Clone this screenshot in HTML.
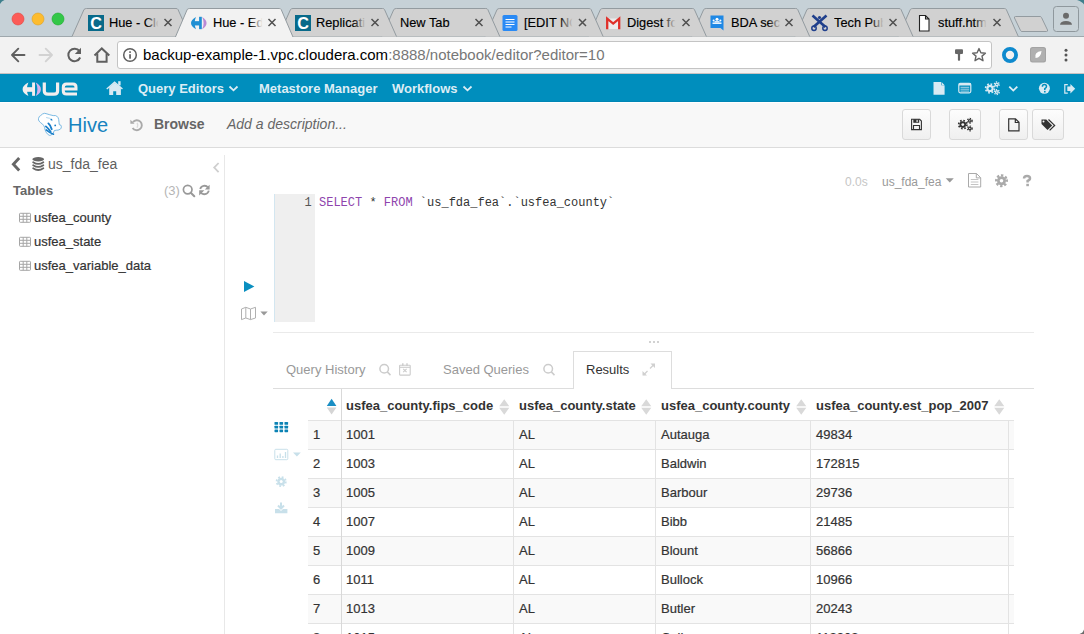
<!DOCTYPE html>
<html><head><meta charset="utf-8">
<style>
*{box-sizing:border-box;margin:0;padding:0}
html,body{width:1084px;height:634px;overflow:hidden;background:#fff;font-family:"Liberation Sans",sans-serif;position:relative}
.a{position:absolute}
svg.a{overflow:visible}
#frame{left:0;top:0;width:1084px;height:37px;background:#c6d1d7}
#toolbar{left:0;top:37px;width:1084px;height:37px;background:#f2f2f2;border-bottom:1px solid #c8c2c2}
#url{left:117px;top:41px;width:875px;height:28px;background:#fff;border:1px solid #c4c4c4;border-radius:3px}
#urltext{left:143px;top:45px;font-size:15px;color:#000;white-space:pre;line-height:20px}
#urltext span{color:#777}
#nav{left:0;top:74px;width:1084px;height:28px;background:#008ebd;border-bottom:1px solid #0086b5}
.nt{top:80.6px;font-size:13px;font-weight:bold;color:#dcedf5;line-height:16px;white-space:pre}
#hdr{left:0;top:102px;width:1084px;height:46px;background:#f8f8f8;border-top:1px solid #fff;border-bottom:1px solid #dcdcdc}
.btn{top:109px;height:31px;border:1px solid #d9d9d9;border-radius:3px;background:linear-gradient(#fdfdfd,#efefef)}
.tabt{font-size:12.8px;color:#000;-webkit-text-stroke:0.15px #000;white-space:pre;top:15px;line-height:15px;overflow:hidden;width:50px}
.fade{top:12px;width:14px;height:20px;background:linear-gradient(90deg,rgba(209,209,209,0),#d1d1d1 90%)}
.fadea{top:12px;width:14px;height:20px;background:linear-gradient(90deg,rgba(242,242,242,0),#f2f2f2 90%)}
.tx{font-size:13px;color:#333;-webkit-text-stroke:0.2px #333;white-space:pre;line-height:16px}
.th{top:398px;font-size:13px;font-weight:bold;color:#333;white-space:pre;line-height:16px}
.td{font-size:13px;color:#333;-webkit-text-stroke:0.2px #333;white-space:pre;line-height:16px}
</style></head><body>

<!-- ============ Chrome frame ============ -->
<div id="frame" class="a"></div>
<svg class="a" style="left:0;top:0" width="1084" height="37">
  <circle cx="18" cy="19" r="6" fill="#fc5b57" stroke="#e0443e" stroke-width="0.6"/>
  <circle cx="38" cy="19" r="6" fill="#fdbc2e" stroke="#dea123" stroke-width="0.6"/>
  <circle cx="58" cy="19" r="6" fill="#33c748" stroke="#1aab29" stroke-width="0.6"/>
  <line x1="0" y1="36.5" x2="1084" y2="36.5" stroke="#9fa8ad" stroke-width="1"/>
  <g stroke="#939ba0" stroke-width="1" fill="#d1d1d1">
    <path d="M72,36.5 L84,9.5 Q85,8.5 86.5,8.5 L176,8.5 Q177.5,8.5 178,9.5 L190,36.5"/>
    <path d="M898.3,36.5 L910.3,9.5 Q911.3,8.5 912.8,8.5 L1004.3,8.5 Q1005.8,8.5 1006.3,9.5 L1018.3,36.5"/>
    <path d="M795,36.5 L807,9.5 Q808,8.5 809.5,8.5 L899,8.5 Q900.5,8.5 901,9.5 L913,36.5"/>
    <path d="M691.7,36.5 L703.7,9.5 Q704.7,8.5 706.2,8.5 L795.7,8.5 Q797.2,8.5 797.7,9.5 L809.7,36.5"/>
    <path d="M588.4,36.5 L600.4,9.5 Q601.4,8.5 602.9,8.5 L692.4,8.5 Q693.9,8.5 694.4,9.5 L706.4,36.5"/>
    <path d="M485.1,36.5 L497.1,9.5 Q498.1,8.5 499.6,8.5 L589.1,8.5 Q590.6,8.5 591.1,9.5 L603.1,36.5"/>
    <path d="M381.8,36.5 L393.8,9.5 Q394.8,8.5 396.3,8.5 L485.8,8.5 Q487.3,8.5 487.8,9.5 L499.8,36.5"/>
    <path d="M278.5,36.5 L290.5,9.5 Q291.5,8.5 293,8.5 L382.5,8.5 Q384,8.5 384.5,9.5 L396.5,36.5"/>
    <path d="M175.2,37.5 L187.2,9.5 Q188.2,8.5 189.7,8.5 L279.2,8.5 Q280.7,8.5 281.2,9.5 L293.2,37.5" fill="#f2f2f2"/>
    <path d="M1015.5,16.5 L1040,16.5 Q1041,16.5 1041.5,17.5 L1047.5,30 Q1048,31.5 1046.5,31.5 L1022,31.5 Q1021,31.5 1020.5,30.5 L1014.5,18 Q1014,16.5 1015.5,16.5Z"/>
  </g>
  <rect x="1053.5" y="6.5" width="25" height="25" rx="3" fill="#c9d3d8" stroke="#8f989d"/>
  <circle cx="1066" cy="15.8" r="3" fill="#6a6a6a"/>
  <path d="M1060,24.7 Q1060.5,21 1066,21 Q1071.5,21 1072,24.7Z" fill="#6a6a6a"/>
  <path d="M0,0 H4.5 Q1.5,1 0,4Z" fill="#3e7f8c"/>
  <path d="M1084,0 H1077 Q1082,1.5 1084,4.5Z" fill="#3e7f8c"/>
</svg>
<div class="a tabt" style="left:109px">Hue - Cloudera</div><div class="a fade" style="left:146px"></div>
<div class="a tabt" style="left:213px">Hue - Editor</div><div class="a fadea" style="left:250px"></div>
<div class="a tabt" style="left:316px">Replication</div><div class="a fade" style="left:353px"></div>
<div class="a tabt" style="left:400px;width:60px">New Tab</div>
<div class="a tabt" style="left:524px">[EDIT NOTES</div><div class="a fade" style="left:560px"></div>
<div class="a tabt" style="left:627px">Digest for</div><div class="a fade" style="left:663px"></div>
<div class="a tabt" style="left:731px">BDA secret</div><div class="a fade" style="left:768px"></div>
<div class="a tabt" style="left:834px">Tech Pubs</div><div class="a fade" style="left:871px"></div>
<div class="a tabt" style="left:938px">stuff.html</div><div class="a fade" style="left:974px"></div>
<svg class="a" style="left:0;top:0" width="1084" height="37">
  <!-- favicons -->
  <rect x="88" y="15" width="16" height="16" fill="#086a8a"/>
  <text x="96.2" y="29" font-family="Liberation Sans" font-weight="bold" font-size="16.2" fill="#fff" text-anchor="middle">C</text>
  <rect x="295" y="15" width="16" height="16" fill="#086a8a"/>
  <text x="303.2" y="29" font-family="Liberation Sans" font-weight="bold" font-size="16.2" fill="#fff" text-anchor="middle">C</text>
  <!-- hue favicon -->
  <g transform="translate(171.8,7.96) scale(0.85,0.93)">
  <g fill="#1f8fd3">
    <path d="M28.4,9.6 Q22.6,12.5 22.6,16.3 Q22.6,20.2 28.4,23 Q26.9,19.8 26.9,16.3 Q26.9,12.8 28.4,9.6Z"/>
    <rect x="26" y="14.2" width="7" height="4.6"/>
    <rect x="32.1" y="9.5" width="3.2" height="13.3"/>
  </g>
  <path d="M35.8,9.6 Q40.9,12.5 40.9,16.3 Q40.9,20.2 35.8,23 Q37.4,19.8 37.4,16.3 Q37.4,12.8 35.8,9.6Z" fill="#b98ad6"/>
  </g>
  <!-- docs -->
  <rect x="502.5" y="15" width="15" height="16" rx="1.5" fill="#2a8af5"/>
  <path d="M505.5,19.5h9M505.5,22h9M505.5,24.5h9M505.5,27h6" stroke="#fff" stroke-width="1"/>
  <!-- gmail -->
  <path d="M607,18.5 h12.5 v10.5 h-12.5z" fill="#ececec"/>
  <path d="M607.2,29.2 V18.6 L613.2,23.6 L619.2,18.6 V29.2" fill="none" stroke="#e0302a" stroke-width="2.3" stroke-linejoin="miter"/>
  <!-- classroom-ish -->
  <path d="M710.5,15.5 H723.5 V30.5 L720.5,28 H710.5Z" fill="#1e88e5"/>
  <path d="M712.5,23.2 h9" stroke="#fff" stroke-width="1.4"/><circle cx="717" cy="19.3" r="1.5" fill="#fff"/>
  <circle cx="713.6" cy="20.6" r="1" fill="#fff"/><circle cx="720.4" cy="20.6" r="1" fill="#fff"/>
  <path d="M714.5,21.8 h5" stroke="#fff" stroke-width="1.2"/>
  <!-- scissors -->
  <path d="M812.5,15.5 L825.5,27 M826.5,15.5 L813.5,27" stroke="#1f3f8c" stroke-width="2.6"/><circle cx="819.5" cy="17.5" r="1.6" fill="#1f3f8c"/>
  <circle cx="814" cy="28.3" r="2.2" fill="none" stroke="#1f3f8c" stroke-width="1.5"/>
  <circle cx="825" cy="28.3" r="2.2" fill="none" stroke="#1f3f8c" stroke-width="1.5"/>
  <!-- file -->
  <path d="M919.5,15.5 h6 l3.5,3.5 v12 h-9.5z M925.5,15.5 v3.5 h3.5" fill="#fff" stroke="#222" stroke-width="1.1"/>
  <!-- close x's -->
  <g stroke="#505050" stroke-width="1.5">
    <path d="M164.5,19 l7,7 M171.5,19 l-7,7"/>
    <path d="M268.5,19 l7,7 M275.5,19 l-7,7"/>
    <path d="M371.5,19 l7,7 M378.5,19 l-7,7"/>
    <path d="M475.5,19 l7,7 M482.5,19 l-7,7"/>
    <path d="M579,19 l7,7 M586,19 l-7,7"/>
    <path d="M682.5,19 l7,7 M689.5,19 l-7,7"/>
    <path d="M785.5,19 l7,7 M792.5,19 l-7,7"/>
    <path d="M889.5,19 l7,7 M896.5,19 l-7,7"/>
    <path d="M993.5,19 l7,7 M1000.5,19 l-7,7"/>
  </g>
</svg>

<!-- ============ Toolbar ============ -->
<div id="toolbar" class="a"></div>
<div id="url" class="a"></div>
<div id="urltext" class="a">backup-example-1.vpc.cloudera.com<span>:8888/notebook/editor?editor=10</span></div>
<svg class="a" style="left:0;top:0" width="1084" height="73">
  <g fill="none" stroke="#5f5f5f" stroke-width="1.9" stroke-linecap="round" stroke-linejoin="round">
    <path d="M24.5,55 H12 M18.3,48.7 L12,55 L18.3,61.3"/>
  </g>
  <g fill="none" stroke="#d2d2d2" stroke-width="1.9" stroke-linecap="round" stroke-linejoin="round">
    <path d="M39.5,55 H52 M45.7,48.7 L52,55 L45.7,61.3"/>
  </g>
  <path d="M79.5,51.2 A6.2,6.2 0 1 0 80.2,57.5" fill="none" stroke="#5f5f5f" stroke-width="2"/>
  <path d="M81,47.8 V54 H74.8Z" fill="#5f5f5f"/>
  <g fill="none" stroke="#5f5f5f" stroke-width="2" stroke-linejoin="miter">
    <path d="M94.5,55.5 L101.8,48.4 L109.3,55.5"/>
    <path d="M97.3,53.5 V61.8 H106.6 V53.5"/>
  </g>
  <circle cx="130" cy="55" r="6.3" fill="none" stroke="#5f5f5f" stroke-width="1.5"/>
  <rect x="129.2" y="51.3" width="1.7" height="1.6" fill="#5f5f5f"/>
  <rect x="129.2" y="54.2" width="1.7" height="4.5" fill="#5f5f5f"/>
  <!-- key -->
  <rect x="955" y="49.2" width="8" height="4.8" rx="1" fill="#666"/>
  <rect x="957.9" y="53.5" width="2.2" height="7.2" rx="0.8" fill="#666"/>
  <!-- star -->
  <path d="M979,48.6 L980.9,52.8 L985.4,53.2 L982,56.1 L983,60.7 L979,58.3 L975,60.7 L976,56.1 L972.6,53.2 L977.1,52.8Z" fill="none" stroke="#666" stroke-width="1.4" stroke-linejoin="round"/>
  <!-- ext ring -->
  <circle cx="1010" cy="55" r="6.1" fill="none" stroke="#0e8ace" stroke-width="3.8"/>
  <!-- gray ext -->
  <rect x="1030" y="47" width="16" height="15.6" rx="2.5" fill="#a3a3a3"/>
  <rect x="1031" y="48" width="14" height="13.6" rx="2" fill="#b0b0b0"/>
  <path d="M1035.5,58 Q1034,52 1041.5,51 Q1041,57.5 1035.5,58Z" fill="#fff"/>
  <!-- menu -->
  <circle cx="1066" cy="50.2" r="1.5" fill="#555"/>
  <circle cx="1066" cy="55" r="1.5" fill="#555"/>
  <circle cx="1066" cy="59.9" r="1.5" fill="#555"/>
</svg>

<!-- ============ Hue nav ============ -->
<div id="nav" class="a"></div>
<svg class="a" style="left:0;top:73px" width="1084" height="29">
  <!-- logo -->
  <g fill="#f3eeee">
    <path d="M28.4,9.6 Q22.6,12.5 22.6,16.3 Q22.6,20.2 28.4,23 Q26.9,19.8 26.9,16.3 Q26.9,12.8 28.4,9.6Z"/>
    <rect x="26" y="14.2" width="7" height="4.6"/>
    <rect x="32.1" y="9.5" width="2.9" height="13.3"/>
  </g>
  <path d="M35.8,9.6 Q40.9,12.5 40.9,16.3 Q40.9,20.2 35.8,23 Q37.4,19.8 37.4,16.3 Q37.4,12.8 35.8,9.6Z" fill="#d6b2ee"/>
  <path d="M44.3,9.5 V18 Q44.3,21.1 48,21.1 H54 Q57.6,21.1 57.6,18 V9.5" fill="none" stroke="#f3eeee" stroke-width="3.2"/>
  <path d="M77,21.1 H66.5 Q63.3,21.1 63.3,18 V14.2 Q63.3,11.1 66.5,11.1 H73 Q76,11.1 76,14.2 V15.9 H64" fill="none" stroke="#f3eeee" stroke-width="3"/>
  <!-- home -->
  <g fill="#d8eaf3">
    <path d="M106.3,15.4 L114.6,8.3 L122.9,15.4 L122,16.4 L114.6,10.2 L107.2,16.4Z"/>
    <rect x="118.2" y="8.2" width="2.4" height="4.2"/>
    <path d="M109.2,14.2 L114.6,9.9 L120.9,14.6 V22 H116.2 V18.2 H113.2 V22 H109.2Z"/>
  </g>
  <!-- chevrons -->
  <g fill="none" stroke="#dcedf5" stroke-width="1.8">
    <path d="M229.5,13.5 L233.5,17.3 L237.5,13.5"/>
    <path d="M463.5,13.5 L467.5,17.3 L471.5,13.5"/>
    <path d="M1009.3,13.6 L1013.3,17.6 L1017.3,13.6"/>
  </g>
  <!-- right icons -->
  <path d="M933.5,9 H941 L944.6,12.6 V21.8 H933.5Z" fill="#d8eaf3"/>
  <path d="M941.3,9 V12.3 H944.6Z" fill="#008ebd"/>
  <path d="M941.8,9.3 L944.4,12 H941.8Z" fill="#d8eaf3"/>
  <rect x="958.8" y="10.3" width="12" height="9.5" rx="1.5" fill="none" stroke="#d8eaf3" stroke-width="1.2"/>
  <rect x="959" y="10.2" width="11.8" height="2.3" fill="#d8eaf3"/>
  <path d="M960.5,14.3 H969.2 M960.5,16.2 H969.2 M960.5,18.1 H969.2" stroke="#a8d2e6" stroke-width="1"/>
  <circle cx="990" cy="15.4" r="3.6" fill="#d8eaf3"/><circle cx="990" cy="15.4" r="4.40" fill="none" stroke="#d8eaf3" stroke-width="1.7" stroke-dasharray="1.728 1.728"/><circle cx="990" cy="15.4" r="1.5" fill="#008ebd"/><circle cx="996.8" cy="11.4" r="2.0" fill="#d8eaf3"/><circle cx="996.8" cy="11.4" r="2.5" fill="none" stroke="#d8eaf3" stroke-width="1.2" stroke-dasharray="1.31 1.31"/><circle cx="996.8" cy="11.4" r="0.7" fill="#008ebd"/><circle cx="996.8" cy="19.1" r="2.0" fill="#d8eaf3"/><circle cx="996.8" cy="19.1" r="2.5" fill="none" stroke="#d8eaf3" stroke-width="1.2" stroke-dasharray="1.31 1.31"/><circle cx="996.8" cy="19.1" r="0.7" fill="#008ebd"/>
  <circle cx="1044.4" cy="15.3" r="5.5" fill="#d8eaf3"/>
  <path d="M1042.4,13.7 Q1042.4,11.6 1044.4,11.6 Q1046.5,11.6 1046.5,13.4 Q1046.5,14.7 1044.8,15.6 V17" fill="none" stroke="#008ebd" stroke-width="1.5"/>
  <rect x="1044" y="17.9" width="1.6" height="1.6" fill="#008ebd"/>
  <path d="M1067.8,11.6 H1064.8 V20.2 H1067.8" fill="none" stroke="#d8eaf3" stroke-width="1.2"/>
  <path d="M1067.3,13.5 H1070.4 V11.1 L1075.2,15.8 L1070.4,20.5 V18.1 H1067.3Z" fill="#d8eaf3"/>
</svg>
<div class="a nt" style="left:138px">Query Editors</div>
<div class="a nt" style="left:259px">Metastore Manager</div>
<div class="a nt" style="left:392px">Workflows</div>

<!-- ============ Header ============ -->
<div id="hdr" class="a"></div>
<div class="a" style="left:68px;top:113px;font-size:20px;color:#1683bf;line-height:24px">Hive</div>
<div class="a" style="left:154px;top:116px;font-size:14px;font-weight:bold;color:#666;line-height:17px">Browse</div>
<div class="a" style="left:227px;top:116px;font-size:14px;font-style:italic;color:#666;line-height:17px">Add a description...</div>
<div class="a btn" style="left:902px;width:29px"></div>
<div class="a btn" style="left:949px;width:32px"></div>
<div class="a btn" style="left:999px;width:29px"></div>
<div class="a btn" style="left:1032px;width:32px"></div>
<svg class="a" style="left:0;top:102px" width="1084" height="46">
  <!-- hive logo -->
  <path d="M38.5,16.6 Q39,14 40.6,13.6 Q42.5,11.5 44.6,11.3 Q47,11.8 49.2,12.6 L53.2,13.6 Q56,13.3 56.7,14.1 Q58.5,15.5 58.7,17.6 Q59,20.5 59.3,22.7 Q61.5,23 61.3,24.2 Q61.5,26.5 60.3,27.2 Q58,28.5 56.2,28.2 L54.2,28.7 Q53.5,31.5 52.2,32.3 Q50.5,33.6 49.2,33.3 Q47,32 46.1,30.2 Q44.6,27.5 44.6,25.2 Q43.5,23 42.6,22.2 Q40,20.5 39.1,19.1 Q38.2,18 38.5,16.6Z" fill="#fff" stroke="#5aa8dc" stroke-width="0.8"/>
  <g fill="none" stroke="#1b7fc9" stroke-linecap="round">
    <path d="M48.4,21.4 Q50.8,23.5 51.7,27.2" stroke-width="1.9"/>
    <path d="M45.9,24.4 Q48.5,26.5 50.7,29.7" stroke-width="1.7"/>
    <path d="M46.2,27.9 Q49.5,30.8 53.5,32.2" stroke-width="1.5"/>
    <path d="M46.5,15.5 Q50,15.5 52.5,18.5" stroke="#9ccbea" stroke-width="0.8"/>
  </g>
  <circle cx="51.4" cy="17.6" r="0.9" fill="#1b7fc9"/>
  <circle cx="55.2" cy="23.4" r="0.9" fill="#1b7fc9"/>
  <!-- history -->
  <path d="M132.6,25.9 A5,5 0 1 0 132.9,20.1" fill="none" stroke="#aaa" stroke-width="1.9"/>
  <path d="M130.4,17.8 V21.7 H134.6Z" fill="#aaa"/>
  <path d="M137,20.8 Q138.5,22.8 137,25.8" fill="none" stroke="#dadada" stroke-width="1.3"/>
  <!-- save -->
  <g fill="none" stroke="#333" stroke-width="1.1">
    <path d="M911.6,17.3 H919.7 L921.4,19 V27.6 H911.6Z"/>
    <path d="M913.5,27.6 V23.5 H919.5 V27.6"/>
  </g>
  <rect x="913.3" y="17.2" width="5.9" height="3.6" fill="#333"/>
  <rect x="916.5" y="17.9" width="1.2" height="2.2" fill="#f4f4f4"/>
  <!-- cogs -->
  <circle cx="962.8" cy="22.6" r="3.3" fill="#333"/><circle cx="962.8" cy="22.6" r="4.10" fill="none" stroke="#333" stroke-width="1.7" stroke-dasharray="1.610 1.610"/><circle cx="962.8" cy="22.6" r="1.4" fill="#f4f4f4"/><circle cx="969.8" cy="18.8" r="1.9" fill="#333"/><circle cx="969.8" cy="18.8" r="2.4" fill="none" stroke="#333" stroke-width="1.2" stroke-dasharray="1.26 1.26"/><circle cx="969.8" cy="18.8" r="0.65" fill="#f4f4f4"/><circle cx="969.8" cy="26.4" r="1.9" fill="#333"/><circle cx="969.8" cy="26.4" r="2.4" fill="none" stroke="#333" stroke-width="1.2" stroke-dasharray="1.26 1.26"/><circle cx="969.8" cy="26.4" r="0.65" fill="#f4f4f4"/>
  <!-- file -->
  <path d="M1008.7,16.8 H1015.5 L1019,20.3 V28.9 H1008.7Z M1015.3,16.8 V20.5 H1019" fill="none" stroke="#333" stroke-width="1.2"/>
  <!-- tags -->
  <path d="M1041.5,17.5 H1046.3 L1052.2,23.4 L1047.5,28.1 L1041.5,22.1Z" fill="#333"/>
  <circle cx="1043.5" cy="19.4" r="1" fill="#f6f6f6"/>
  <path d="M1048.5,17.5 L1054.6,23.4 L1049.6,28.4" fill="none" stroke="#333" stroke-width="1.3"/>
</svg>

<!-- ============ Sidebar ============ -->
<div class="a" style="left:224px;top:155px;width:1px;height:479px;background:#e8e8e8"></div>
<div class="a" style="left:48px;top:156px;font-size:14px;color:#5f5f5f;line-height:17px">us_fda_fea</div>
<div class="a" style="left:13px;top:183px;font-size:13px;font-weight:bold;color:#666;line-height:16px">Tables</div>
<div class="a" style="left:164px;top:183px;font-size:13px;color:#b5b5b5;line-height:16px">(3)</div>
<div class="a tx" style="left:34px;top:210px">usfea_county</div>
<div class="a tx" style="left:34px;top:234px">usfea_state</div>
<div class="a tx" style="left:34px;top:258px">usfea_variable_data</div>
<svg class="a" style="left:0;top:148px" width="224" height="130">
  <path d="M19.2,10 L13.4,16.2 L19.2,22.4" fill="none" stroke="#666" stroke-width="2.9"/>
  <ellipse cx="38.25" cy="11.3" rx="5.9" ry="2.2" fill="#666"/>
  <g fill="none" stroke="#666" stroke-width="1.9" stroke-linecap="round">
    <path d="M33.2,14.2 Q38.25,17.6 43.3,14.2"/>
    <path d="M33.2,17.2 Q38.25,20.6 43.3,17.2"/>
    <path d="M33.2,20.3 Q38.25,23.7 43.3,20.3"/>
  </g>
  <path d="M218.6,15 L214.2,19.6 L218.6,24.2" fill="none" stroke="#cfcfcf" stroke-width="1.8"/>
  <circle cx="187.7" cy="41.6" r="4.3" fill="none" stroke="#999" stroke-width="1.7"/>
  <path d="M190.8,44.8 L194.3,48.3" stroke="#999" stroke-width="2" stroke-linecap="round"/>
  <path d="M200.2,41 A4.4,4.4 0 0 1 208,39.6" fill="none" stroke="#999" stroke-width="1.8"/>
  <path d="M209.6,36.8 V41.6 H204.8Z" fill="#999"/>
  <path d="M208.8,42.6 A4.6,4.6 0 0 1 200.5,44.2" fill="none" stroke="#999" stroke-width="1.8"/>
  <path d="M199.2,47.5 V42.3 H204.4Z" fill="#999"/>
  <g fill="none" stroke="#a5a5a5" stroke-width="1">
    <rect x="19.5" y="65.3" width="11" height="9" rx="0.8"/>
    <path d="M19.5,68.3 H30.5 M19.5,71.3 H30.5 M23.2,65.3 V74.3 M26.8,65.3 V74.3"/>
    <rect x="19.5" y="89.3" width="11" height="9" rx="0.8"/>
    <path d="M19.5,92.3 H30.5 M19.5,95.3 H30.5 M23.2,89.3 V98.3 M26.8,89.3 V98.3"/>
    <rect x="19.5" y="113.3" width="11" height="9" rx="0.8"/>
    <path d="M19.5,116.3 H30.5 M19.5,119.3 H30.5 M23.2,113.3 V122.3 M26.8,113.3 V122.3"/>
  </g>
</svg>

<!-- ============ Editor ============ -->
<div class="a" style="left:274px;top:194px;width:41px;height:128px;background:#efefef;border-left:1px solid #d3e6f0"></div>
<div class="a" style="left:304.5px;top:196px;font-family:'Liberation Mono',monospace;font-size:12px;color:#555;line-height:15px">1</div>
<div class="a" style="left:319px;top:196px;font-family:'Liberation Mono',monospace;font-size:12px;color:#333;line-height:15px;white-space:pre"><span style="color:#8e44ad">SELECT</span> * <span style="color:#8e44ad">FROM</span> `us_fda_fea`.`usfea_county`</div>
<div class="a" style="left:273px;top:332px;width:761px;height:1px;background:#eaeaea"></div>
<div class="a" style="left:845px;top:175px;font-size:12px;color:#c6c6c6;line-height:15px">0.0s</div>
<div class="a" style="left:882px;top:175px;font-size:12px;color:#999;line-height:15px">us_fda_fea</div>
<svg class="a" style="left:0;top:0" width="1084" height="634">
  <path d="M244,280.9 L254.4,286.4 L244,291.9Z" fill="#0a8fc0"/>
  <path d="M241.5,309 L245.8,307.3 L250.5,309 L255.5,307.3 V318 L250.5,319.6 L245.8,318 L241.5,319.6Z M245.8,307.3 V318 M250.5,309 V319.6" fill="none" stroke="#b0b0b0" stroke-width="1" stroke-linejoin="round"/>
  <path d="M260.4,311.6 H267.7 L264,315.4Z" fill="#999"/>
  <path d="M945.7,178.3 H953.8 L949.75,182.5Z" fill="#999"/>
  <path d="M968.5,173.5 H976.5 L980.7,177.7 V187 H968.5Z M976.3,173.5 V177.9 H980.7" fill="none" stroke="#aaa" stroke-width="1"/>
  <path d="M970.8,179.5 H978.4 M970.8,182 H978.4 M970.8,184.5 H978.4" stroke="#b5b5b5" stroke-width="0.8"/>
  <circle cx="1001.5" cy="180.7" r="4.5" fill="#aaa"/>
  <circle cx="1001.5" cy="180.7" r="5.3" fill="none" stroke="#aaa" stroke-width="2.4" stroke-dasharray="2.289 1.873" transform="rotate(-12.38 1001.5 180.7)"/>
  <circle cx="1001.5" cy="180.7" r="1.8" fill="#fff"/>
  <path d="M1024,178.6 Q1024,175.9 1027,175.9 Q1030,175.9 1030,178.3 Q1030,180 1027.6,181 V182.6" fill="none" stroke="#aaa" stroke-width="2.5"/>
  <rect x="1026.3" y="183.8" width="2.6" height="2.4" fill="#aaa"/>
</svg>

<!-- ============ Result tabs ============ -->
<div class="a" style="left:648px;top:341px;width:11px;height:2px;background-image:radial-gradient(circle,#d2d2d2 0.9px,transparent 1px);background-size:4px 2px"></div>
<div class="a" style="left:273px;top:388px;width:761px;height:1px;background:#ddd"></div>
<div class="a" style="left:573px;top:351px;width:99px;height:38px;background:#fff;border:1px solid #ddd;border-bottom:none"></div>
<div class="a" style="left:286px;top:362px;font-size:13px;color:#999;line-height:16px">Query History</div>
<div class="a" style="left:443px;top:362px;font-size:13px;color:#999;line-height:16px">Saved Queries</div>
<div class="a" style="left:586px;top:362px;font-size:13px;color:#333;line-height:16px">Results</div>
<svg class="a" style="left:0;top:0" width="1084" height="634">
  <g fill="none" stroke="#ccc" stroke-width="1.5">
    <circle cx="384.2" cy="368.7" r="4.3"/><path d="M387.3,371.9 L390.5,375.1"/>
    <circle cx="548.2" cy="368.7" r="4.3"/><path d="M551.3,371.9 L554.5,375.1"/>
  </g>
  <g fill="none" stroke="#ccc" stroke-width="1.1">
    <rect x="399.6" y="365.3" width="10.6" height="9.8" rx="0.5"/>
    <path d="M399.6,367.3 H410.2"/>
    <path d="M402.8,363.2 V366 M407,363.2 V366" stroke-width="1.4"/>
    <path d="M403.2,368.8 L406.6,372.2 M406.6,368.8 L403.2,372.2"/>
  </g>
  <g fill="none" stroke="#d0d0d0" stroke-width="1.1">
    <path d="M650,368.5 L654,364.5 M643.5,375 L647.5,371" stroke-width="1.2"/>
  </g>
  <g fill="#d0d0d0">
    <path d="M650.5,363.5 H655 V368Z M642.5,371 V375.5 H647Z"/>
  </g>
  <!-- left result toolbar -->
  <g fill="#0b82b4">
    <rect x="274.5" y="422" width="3.6" height="2.8" rx="0.6"/><rect x="279.5" y="422" width="3.6" height="2.8" rx="0.6"/><rect x="284.5" y="422" width="3.6" height="2.8" rx="0.6"/>
    <rect x="274.5" y="425.7" width="3.6" height="2.8" rx="0.6"/><rect x="279.5" y="425.7" width="3.6" height="2.8" rx="0.6"/><rect x="284.5" y="425.7" width="3.6" height="2.8" rx="0.6"/>
    <rect x="274.5" y="429.4" width="3.6" height="2.8" rx="0.6"/><rect x="279.5" y="429.4" width="3.6" height="2.8" rx="0.6"/><rect x="284.5" y="429.4" width="3.6" height="2.8" rx="0.6"/>
  </g>
  <g fill="none" stroke="#c8e0ea" stroke-width="1">
    <rect x="274.8" y="449.3" width="13" height="10.4" rx="1"/>
  </g>
  <path d="M277.5,458 V455.5 M280.2,458 V453.5 M282.9,458 V456 M285.5,458 V452" stroke="#c8e0ea" stroke-width="1.3"/>
  <path d="M293,452.6 H300.8 L296.9,456.6Z" fill="#c8e0ea"/>
  <circle cx="281.2" cy="481.6" r="3.9" fill="#c8e0ea"/>
  <circle cx="281.2" cy="481.6" r="4.6" fill="none" stroke="#c8e0ea" stroke-width="1.8" stroke-dasharray="1.806 1.806"/>
  <circle cx="281.2" cy="481.6" r="1.5" fill="#fff"/>
  <path d="M281,502.5 V508 M278,505.5 L281,508.5 L284,505.5" fill="none" stroke="#c8e0ea" stroke-width="2"/>
  <path d="M275,509 H279 L281,511 L283,509 H287.4 V513.3 H275Z" fill="#c8e0ea"/>
</svg>

<!-- ============ Table ============ -->
<div class="a th" style="left:346px">usfea_county.fips_code</div>
<div class="a th" style="left:519px">usfea_county.state</div>
<div class="a th" style="left:661px">usfea_county.county</div>
<div class="a th" style="left:816px">usfea_county.est_pop_2007</div>
<div class="a" style="left:308px;top:420px;width:706px;height:1px;background:#e3e3e3"></div>
<div class="a" style="left:308px;top:421px;width:706px;height:28px;background:#f9f9f9"></div>
<div class="a td" style="left:313px;top:427px">1</div>
<div class="a td" style="left:346px;top:427px">1001</div>
<div class="a td" style="left:519px;top:427px">AL</div>
<div class="a td" style="left:661px;top:427px">Autauga</div>
<div class="a td" style="left:816px;top:427px">49834</div>
<div class="a" style="left:308px;top:449px;width:706px;height:1px;background:#e3e3e3"></div>
<div class="a" style="left:308px;top:450px;width:706px;height:28px;background:#fff"></div>
<div class="a td" style="left:313px;top:456px">2</div>
<div class="a td" style="left:346px;top:456px">1003</div>
<div class="a td" style="left:519px;top:456px">AL</div>
<div class="a td" style="left:661px;top:456px">Baldwin</div>
<div class="a td" style="left:816px;top:456px">172815</div>
<div class="a" style="left:308px;top:478px;width:706px;height:1px;background:#e3e3e3"></div>
<div class="a" style="left:308px;top:479px;width:706px;height:28px;background:#f9f9f9"></div>
<div class="a td" style="left:313px;top:485px">3</div>
<div class="a td" style="left:346px;top:485px">1005</div>
<div class="a td" style="left:519px;top:485px">AL</div>
<div class="a td" style="left:661px;top:485px">Barbour</div>
<div class="a td" style="left:816px;top:485px">29736</div>
<div class="a" style="left:308px;top:507px;width:706px;height:1px;background:#e3e3e3"></div>
<div class="a" style="left:308px;top:508px;width:706px;height:28px;background:#fff"></div>
<div class="a td" style="left:313px;top:514px">4</div>
<div class="a td" style="left:346px;top:514px">1007</div>
<div class="a td" style="left:519px;top:514px">AL</div>
<div class="a td" style="left:661px;top:514px">Bibb</div>
<div class="a td" style="left:816px;top:514px">21485</div>
<div class="a" style="left:308px;top:536px;width:706px;height:1px;background:#e3e3e3"></div>
<div class="a" style="left:308px;top:537px;width:706px;height:28px;background:#f9f9f9"></div>
<div class="a td" style="left:313px;top:543px">5</div>
<div class="a td" style="left:346px;top:543px">1009</div>
<div class="a td" style="left:519px;top:543px">AL</div>
<div class="a td" style="left:661px;top:543px">Blount</div>
<div class="a td" style="left:816px;top:543px">56866</div>
<div class="a" style="left:308px;top:565px;width:706px;height:1px;background:#e3e3e3"></div>
<div class="a" style="left:308px;top:566px;width:706px;height:28px;background:#fff"></div>
<div class="a td" style="left:313px;top:572px">6</div>
<div class="a td" style="left:346px;top:572px">1011</div>
<div class="a td" style="left:519px;top:572px">AL</div>
<div class="a td" style="left:661px;top:572px">Bullock</div>
<div class="a td" style="left:816px;top:572px">10966</div>
<div class="a" style="left:308px;top:594px;width:706px;height:1px;background:#e3e3e3"></div>
<div class="a" style="left:308px;top:595px;width:706px;height:28px;background:#f9f9f9"></div>
<div class="a td" style="left:313px;top:601px">7</div>
<div class="a td" style="left:346px;top:601px">1013</div>
<div class="a td" style="left:519px;top:601px">AL</div>
<div class="a td" style="left:661px;top:601px">Butler</div>
<div class="a td" style="left:816px;top:601px">20243</div>
<div class="a" style="left:308px;top:623px;width:706px;height:1px;background:#e3e3e3"></div>
<div class="a" style="left:308px;top:624px;width:706px;height:28px;background:#fff"></div>
<div class="a td" style="left:313px;top:630px">8</div>
<div class="a td" style="left:346px;top:630px">1015</div>
<div class="a td" style="left:519px;top:630px">AL</div>
<div class="a td" style="left:661px;top:630px">Calhoun</div>
<div class="a td" style="left:816px;top:630px">112903</div>
<div class="a" style="left:513px;top:420px;width:1px;height:214px;background:#e3e3e3"></div>
<div class="a" style="left:655px;top:420px;width:1px;height:214px;background:#e3e3e3"></div>
<div class="a" style="left:810px;top:420px;width:1px;height:214px;background:#e3e3e3"></div>
<div class="a" style="left:1008px;top:420px;width:1px;height:214px;background:#e3e3e3"></div>
<div class="a" style="left:341px;top:389px;width:1px;height:245px;background:#d9d9d9"></div>
<svg class="a" style="left:0;top:0" width="1084" height="634">
<path d="M326.8,406 L331.6,398.8 L336.4,406Z" fill="#1a8ec4"/><path d="M326.8,407.5 L331.6,414.5 L336.4,407.5Z" fill="#d5d5d5"/>
<path d="M499.2,406.3 L504.25,399.2 L509.3,406.3Z M499.2,407.7 L504.25,414.8 L509.3,407.7Z" fill="#d9d9d9"/>
<path d="M641.2,406.3 L646.25,399.2 L651.3,406.3Z M641.2,407.7 L646.25,414.8 L651.3,407.7Z" fill="#d9d9d9"/>
<path d="M796.2,406.3 L801.25,399.2 L806.3,406.3Z M796.2,407.7 L801.25,414.8 L806.3,407.7Z" fill="#d9d9d9"/>
<path d="M994.2,406.3 L999.25,399.2 L1004.3,406.3Z M994.2,407.7 L999.25,414.8 L1004.3,407.7Z" fill="#d9d9d9"/>
</svg>

<svg class="a" style="left:1078px;top:628px" width="6" height="6"><path d="M6,1.5 V6 H1.5 Q5,5 6,1.5Z" fill="#6a6a6a"/></svg>
</body></html>
